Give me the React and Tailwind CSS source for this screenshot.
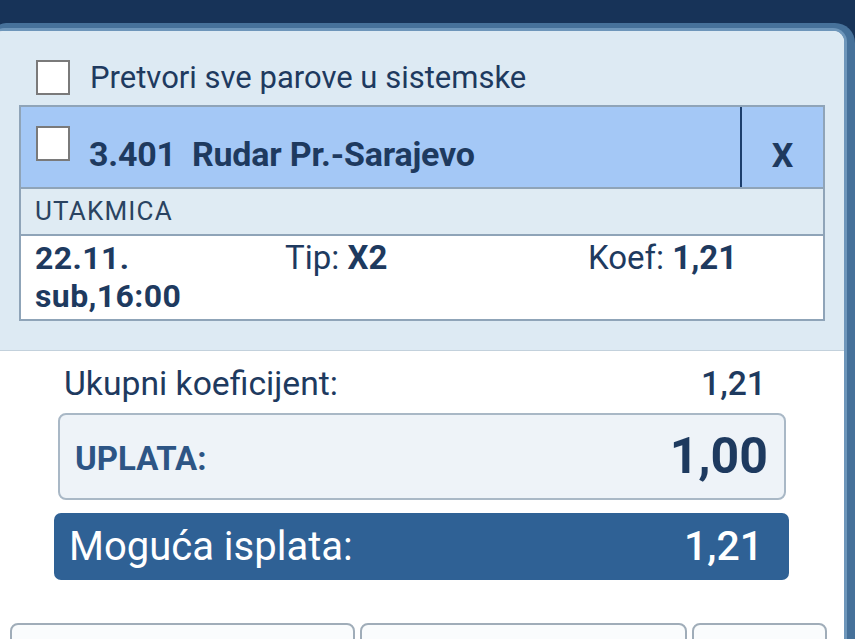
import React from "react";

function Box({ className = "" }) {
  return <div className={"w-[34px] h-[35px] border-2 border-[#7a7a7a] bg-white shrink-0 " + className} />;
}

export default function App() {
  return (
    <div className="w-[855px] h-[639px] bg-[#173358] overflow-hidden text-[#1e3a5f]" style={{ fontFamily: "Roboto, 'Noto Sans', sans-serif" }}>
      <div className="h-[23px]" />
      <div className="ml-[-6px] w-[861px] h-[700px] bg-[#46719a] pt-[5px] pr-[8px] rounded-tl-[12px] rounded-tr-[20px]">
        <div className="h-full bg-white border-t-[3px] border-r-[3px] border-[#6e96ba] rounded-tl-[10px] rounded-tr-[14px] overflow-hidden">
          <div className="pl-[6px]">
            {/* top light section */}
            <div className="h-[320px] bg-[#ddeaf3] border-b border-[#c3d1dc] -ml-[6px] pl-[6px]">
              <div className="flex items-center pt-[29px] pl-[36px]">
                <Box />
                <span className="ml-[20px] text-[31px] leading-[34px]">Pretvori sve parove u sistemske</span>
              </div>
              <div className="ml-[19px] mt-[10px] w-[806px] border-2 border-[#8fa4b8]">
                <div className="flex h-[80px] bg-[#a4c8f6]">
                  <div className="flex-1 flex items-center pl-[15px]">
                    <Box className="mt-[-8px]" />
                    <span className="ml-[19px] text-[34px] font-bold mt-[14px] tracking-[-0.2px]">3.401</span>
                    <span className="ml-[16px] text-[34px] font-bold mt-[14px] tracking-[-0.2px]">Rudar Pr.-Sarajevo</span>
                  </div>
                  <div className="w-[2px] bg-[#1c3e6c]" />
                  <div className="w-[81px] flex items-center justify-center text-[34px] font-bold pt-[16px]">X</div>
                </div>
                <div className="h-[47px] bg-[#dfebf3] border-t-2 border-[#8fa4b8] flex items-center pl-[14px] text-[26px] tracking-[1.2px] text-[#2a4361]">
                  UTAKMICA
                </div>
                <div className="h-[85px] bg-white border-t-2 border-[#8fa4b8] flex pl-[14px]">
                  <div className="w-[250px] font-bold text-[32px] leading-[37.5px] tracking-[0.4px] pt-[4px]">
                    <div>22.11.</div>
                    <div>sub,16:00</div>
                  </div>
                  <div className="w-[303px] text-[33px] leading-[34px] pt-[5px]">
                    Tip: <span className="font-bold">X2</span>
                  </div>
                  <div className="text-[33px] leading-[34px] pt-[5px]">
                    Koef: <span className="font-bold">1,21</span>
                  </div>
                </div>
              </div>
            </div>
            {/* bottom white section */}
            <div className="pt-[15px]">
              <div className="ml-[64px] w-[702px] flex justify-between items-center text-[33.7px] leading-[36px]">
                <span>Ukupni koeficijent:</span>
                <span className="font-medium">1,21</span>
              </div>
              <div className="ml-[58px] mt-[11px] w-[728px] h-[87px] bg-[#eef3f8] border-2 border-[#a9b8c6] rounded-[8px] flex items-center justify-between pl-[15px] pr-[16px]">
                <span className="text-[33px] font-bold text-[#2d5585] mt-[4px]">UPLATA:</span>
                <span className="text-[50px] font-bold">1,00</span>
              </div>
              <div className="ml-[54px] mt-[13px] w-[735px] h-[67px] bg-[#2f6195] rounded-[7px] flex items-center justify-between pl-[15px] pr-[26px] text-white text-[40px]">
                <span>Moguća isplata:</span>
                <span className="font-medium text-[41px]">1,21</span>
              </div>
              <div className="flex mt-[43px] ml-[10px] gap-[5px]">
                <div className="w-[345px] h-[40px] border-2 border-[#a0adb9] rounded-t-[8px] bg-[#fafcfd]" />
                <div className="w-[327px] h-[40px] border-2 border-[#a0adb9] rounded-t-[8px] bg-[#fafcfd]" />
                <div className="w-[135px] h-[40px] border-2 border-[#a0adb9] rounded-t-[8px] bg-[#fafcfd]" />
              </div>
            </div>
          </div>
        </div>
      </div>
    </div>
  );
}
